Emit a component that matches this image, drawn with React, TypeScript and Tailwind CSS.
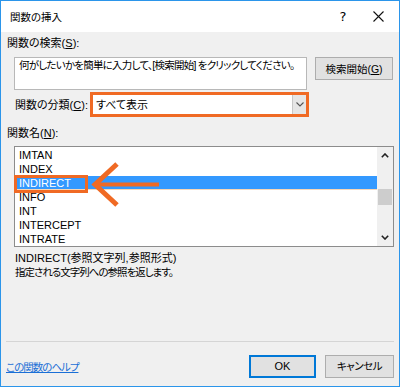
import React from "react";

const items = ["IMTAN", "INDEX", "INDIRECT", "INFO", "INT", "INTERCEPT", "INTRATE"];

export default function App() {
  return (
    <div
      className="relative w-[400px] h-[387px] border border-[#2b95ea] bg-[#f0f0f0] flex flex-col text-[10.5px] text-black overflow-hidden whitespace-nowrap [font-feature-settings:'palt']"
      style={{ fontFamily: '"Liberation Sans", "Noto Sans CJK JP", sans-serif' }}
    >
      {/* title bar */}
      <div className="h-[31px] bg-white flex items-center shrink-0">
        <div className="pl-[9px] leading-[16px] flex-1">関数の挿入</div>
        <div className="w-[20px] text-center text-[13px] mr-[20px]" style={{ fontFamily: '"DejaVu Sans", sans-serif' }}>?</div>
        <svg width="11" height="11" viewBox="0 0 11 11" className="mr-[15px]">
          <path d="M0.5 0.5 L10.5 10.5 M10.5 0.5 L0.5 10.5" stroke="#111" strokeWidth="1.1" />
        </svg>
      </div>

      <div className="flex flex-col pr-[5px]">
        <div className="ml-[6px] mt-[3px] leading-[16px] text-[11px]">
          関数の検索(<span className="underline">S</span>):
        </div>
        <div className="flex mt-[6px] ml-[13px] items-start">
          <div className="w-[293px] h-[33px] bg-white border border-[#b8b8b8] px-[4px] leading-[14px] overflow-hidden tracking-[-0.75px]">
            何がしたいかを簡単に入力して、[検索開始] をクリックしてください。
          </div>
          <div className="ml-[8px] w-[78px] h-[23px] border border-[#adadad] bg-[#e1e1e1] flex items-center justify-center leading-[14px]">
            検索開始(<span className="underline">G</span>)
          </div>
        </div>

        <div className="flex items-center mt-[2px] ml-[14px]">
          <div className="w-[75px] leading-[16px] text-[11px]">
            関数の分類(<span className="underline">C</span>):
          </div>
          <div className="w-[219px] h-[25px] border-[3px] border-[#f06a24] bg-white flex items-center">
            <div className="flex-1 pl-[3px] leading-[14px] text-[11px]">すべて表示</div>
            <div className="w-[14px] h-[19px] bg-[#e6e6e6] border-l border-[#c8c8c8] flex items-center justify-center">
              <svg width="8" height="5" viewBox="0 0 8 5">
                <path d="M0.5 0.5 L4 4 L7.5 0.5" stroke="#555" strokeWidth="1.1" fill="none" />
              </svg>
            </div>
          </div>
        </div>

        <div className="ml-[6px] mt-[8px] leading-[16px] text-[11px]">
          関数名(<span className="underline">N</span>):
        </div>

        <div className="ml-[13px] mt-[5px] h-[101px] border border-[#8c8c8c] bg-white flex text-[11px]">
          <div className="flex-1 pt-[1px] flex flex-col">
            {items.map((it) => (
              <div
                key={it}
                className={
                  it === "INDIRECT"
                    ? "h-[14px] leading-[14px] pl-[4px] bg-[#3399ff] text-white border-b border-[#f7d7b8]"
                    : "h-[14px] leading-[14px] pl-[4px]"
                }
              >
                {it}
              </div>
            ))}
          </div>
          <div className="w-[16px] bg-[#f0f0f0] flex flex-col items-center">
            <div className="h-[17px] flex items-center justify-center">
              <svg width="8" height="5" viewBox="0 0 8 5">
                <path d="M0.8 4.2 L4 1 L7.2 4.2" stroke="#222" strokeWidth="1.6" fill="none" />
              </svg>
            </div>
            <div className="h-[25px]" />
            <div className="w-[14px] h-[16px] bg-[#cdcdcd]" />
            <div className="flex-1" />
            <div className="h-[17px] flex items-center justify-center">
              <svg width="8" height="5" viewBox="0 0 8 5">
                <path d="M0.8 0.8 L4 4 L7.2 0.8" stroke="#222" strokeWidth="1.6" fill="none" />
              </svg>
            </div>
          </div>
        </div>

        <div className="ml-[14px] mt-[4px] leading-[14px] text-[11px]">
          <div>INDIRECT(参照文字列,参照形式)</div>
          <div className="text-[10.5px] tracking-[-1px]">指定される文字列への参照を返します。</div>
        </div>

        <div className="ml-[5px] mt-[62px] h-px bg-[#d5d5d5]" />

        <div className="flex items-center mt-[13px] ml-[5px]">
          <div className="flex-1 text-[#1a6fd6] leading-[16px]">
            <span className="underline tracking-[-1px]">この関数のヘルプ</span>
          </div>
          <div className="w-[67px] h-[23px] border-2 border-[#0078d7] bg-[#e1e1e1] flex items-center justify-center text-[11px]">
            OK
          </div>
          <div className="ml-[9px] w-[69px] h-[23px] border border-[#adadad] bg-[#e1e1e1] flex items-center justify-center tracking-[-0.5px]">
            キャンセル
          </div>
        </div>
      </div>

      {/* highlight overlays */}
      <div className="absolute left-[13px] top-[174px] w-[74px] h-[18px] border-[3px] border-[#f06a24]" />
      <svg className="absolute left-[86px] top-[159px]" width="80" height="50" viewBox="0 0 80 50">
        <path d="M9 24.5 L72 24.5" stroke="#f06a24" strokeWidth="4" />
        <path d="M30 4 L8 24.5 L30 45" stroke="#f06a24" strokeWidth="5" fill="none" strokeLinejoin="miter" />
      </svg>
    </div>
  );
}
